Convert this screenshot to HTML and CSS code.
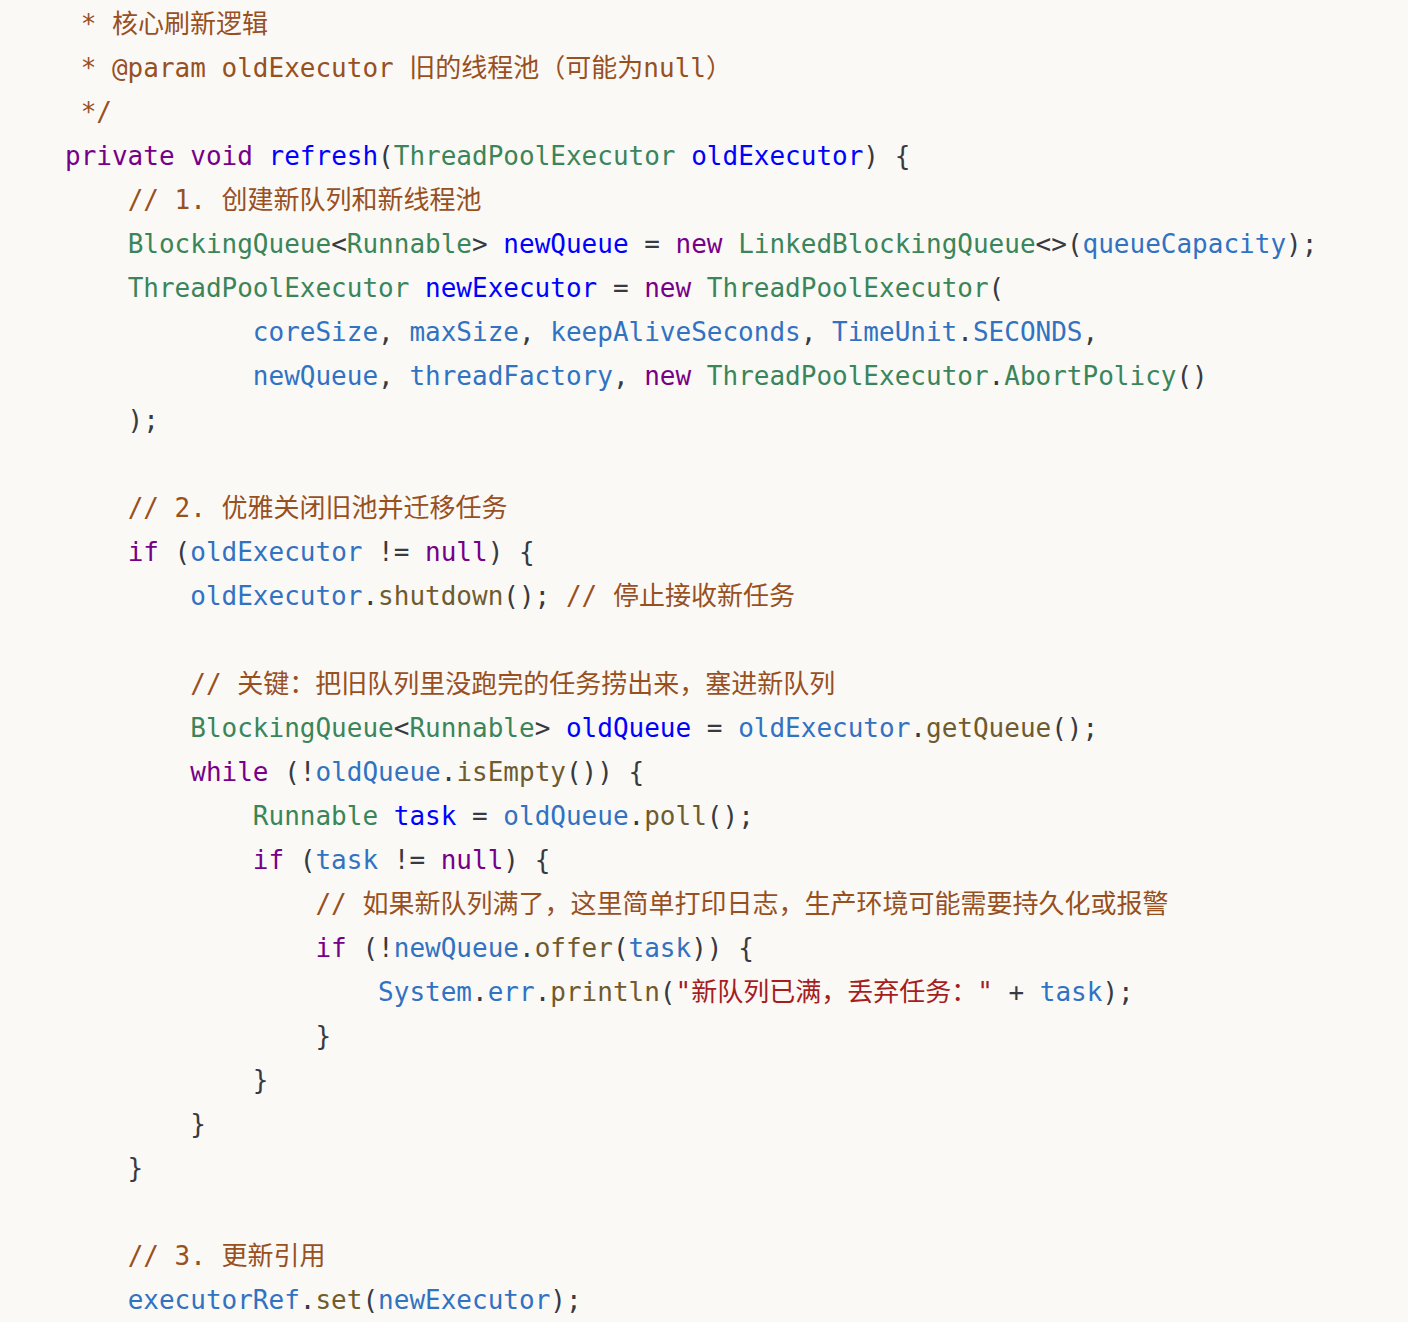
FILE: index.html
```html
<!DOCTYPE html>
<html lang="zh">
<head>
<meta charset="utf-8">
<title>refresh</title>
<link rel="stylesheet" href="styles.css">
</head>
<body>
<pre class="code"><code><span class="c"> * 核心刷新逻辑</span>
<span class="c"> * @param oldExecutor 旧的线程池（可能为null）</span>
<span class="c"> */</span>
<span class="k">private</span> <span class="k">void</span> <span class="d">refresh</span>(<span class="t">ThreadPoolExecutor</span> <span class="d">oldExecutor</span>) {
    <span class="c">// 1. 创建新队列和新线程池</span>
    <span class="t">BlockingQueue</span>&lt;<span class="t">Runnable</span>&gt; <span class="d">newQueue</span> = <span class="k">new</span> <span class="t">LinkedBlockingQueue</span>&lt;&gt;(<span class="v">queueCapacity</span>);
    <span class="t">ThreadPoolExecutor</span> <span class="d">newExecutor</span> = <span class="k">new</span> <span class="t">ThreadPoolExecutor</span>(
            <span class="v">coreSize</span>, <span class="v">maxSize</span>, <span class="v">keepAliveSeconds</span>, <span class="v">TimeUnit</span>.<span class="v">SECONDS</span>,
            <span class="v">newQueue</span>, <span class="v">threadFactory</span>, <span class="k">new</span> <span class="t">ThreadPoolExecutor</span>.<span class="t">AbortPolicy</span>()
    );

    <span class="c">// 2. 优雅关闭旧池并迁移任务</span>
    <span class="k">if</span> (<span class="v">oldExecutor</span> != <span class="k">null</span>) {
        <span class="v">oldExecutor</span>.<span class="m">shutdown</span>(); <span class="c">// 停止接收新任务</span>

        <span class="c">// 关键：把旧队列里没跑完的任务捞出来，塞进新队列</span>
        <span class="t">BlockingQueue</span>&lt;<span class="t">Runnable</span>&gt; <span class="d">oldQueue</span> = <span class="v">oldExecutor</span>.<span class="m">getQueue</span>();
        <span class="k">while</span> (!<span class="v">oldQueue</span>.<span class="m">isEmpty</span>()) {
            <span class="t">Runnable</span> <span class="d">task</span> = <span class="v">oldQueue</span>.<span class="m">poll</span>();
            <span class="k">if</span> (<span class="v">task</span> != <span class="k">null</span>) {
                <span class="c">// 如果新队列满了，这里简单打印日志，生产环境可能需要持久化或报警</span>
                <span class="k">if</span> (!<span class="v">newQueue</span>.<span class="m">offer</span>(<span class="v">task</span>)) {
                    <span class="v">System</span>.<span class="v">err</span>.<span class="m">println</span>(<span class="s">"新队列已满，丢弃任务："</span> + <span class="v">task</span>);
                }
            }
        }
    }

    <span class="c">// 3. 更新引用</span>
    <span class="v">executorRef</span>.<span class="m">set</span>(<span class="v">newExecutor</span>);</code></pre>
</body>
</html>
```

FILE: styles.css
```css
html, body {
  margin: 0;
  padding: 0;
  background: #faf9f6;
}

.code {
  margin: 0;
  padding: 2px 0 0 65px;
  font-family: "DejaVu Sans Mono", "Noto Sans CJK SC", monospace;
  font-size: 26px;
  line-height: 44px;
  color: #383a42;
  white-space: pre;
  overflow: hidden;
}

.code code {
  font-family: inherit;
}

.c { color: #98501f; }
.k { color: #770088; }
.d { color: #0000ff; }
.t { color: #3a8559; }
.v { color: #3172c2; }
.m { color: #6f5b2e; }
.s { color: #a51d1d; }
```
